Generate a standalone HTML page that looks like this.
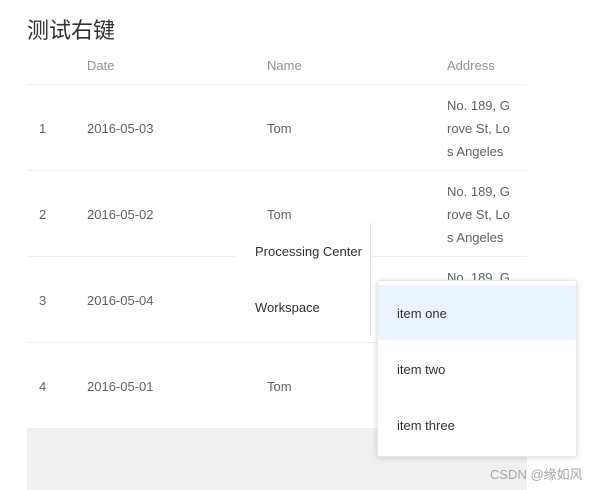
<!DOCTYPE html>
<html><head><meta charset="utf-8"><style>
body{margin:0;width:605px;height:490px;background:#fff;font-family:"Liberation Sans","Noto Sans CJK SC",sans-serif;font-size:13px;color:#606266;position:relative;overflow:hidden}
.a{position:absolute;white-space:nowrap}
.h{color:#909399}
.line{position:absolute;left:27px;width:500px;height:1px;background:#ebeef5}
.addr{position:absolute;left:447px;width:66px;line-height:23px;white-space:normal;word-break:break-all}
</style></head><body>
<div class="a" style="left:27px;top:13px;font-size:22px;color:#333">测试右键</div>
<div class="a h" style="left:87px;top:58px">Date</div>
<div class="a h" style="left:267px;top:58px">Name</div>
<div class="a h" style="left:447px;top:58px">Address</div>
<div class="line" style="top:84px"></div>
<div class="line" style="top:170px"></div>
<div class="line" style="top:256px"></div>
<div class="line" style="top:342px"></div>

<div class="a" style="left:39px;top:121px">1</div><div class="a" style="left:87px;top:121px">2016-05-03</div><div class="a" style="left:267px;top:121px">Tom</div>
<div class="addr" style="top:94px">No. 189, Grove St, Los Angeles</div>
<div class="a" style="left:39px;top:207px">2</div><div class="a" style="left:87px;top:207px">2016-05-02</div><div class="a" style="left:267px;top:207px">Tom</div>
<div class="addr" style="top:180px">No. 189, Grove St, Los Angeles</div>
<div class="a" style="left:39px;top:293px">3</div><div class="a" style="left:87px;top:293px">2016-05-04</div>
<div class="addr" style="top:266px">No. 189, Grove St, Los Angeles</div>
<div class="a" style="left:39px;top:379px">4</div><div class="a" style="left:87px;top:379px">2016-05-01</div><div class="a" style="left:267px;top:379px">Tom</div>
<div style="position:absolute;left:27px;top:428px;width:500px;height:62px;background:#f0f0f0"></div>

<div style="position:absolute;left:235px;top:223px;width:135px;height:112px;background:#fff;border-right:1px solid #dcdfe6"></div>
<div class="a" style="left:255px;top:244px;color:#303133">Processing Center</div>
<div class="a" style="left:255px;top:300px;color:#303133">Workspace</div>

<div style="position:absolute;left:377px;top:280px;width:200px;height:177px;background:#fff;border-radius:3px;box-shadow:0 1px 6px rgba(0,0,0,.15);border:1px solid #e4e7ed;box-sizing:border-box"></div>
<div style="position:absolute;left:378px;top:285px;width:198px;height:55px;background:#ecf5ff"></div>
<div class="a" style="left:397px;top:306px;color:#303133">item one</div>
<div class="a" style="left:397px;top:362px;color:#303133">item two</div>
<div class="a" style="left:397px;top:418px;color:#303133">item three</div>
<div class="a" style="left:490px;top:464px;color:#a8a8a8;font-size:13px">CSDN @缘如风</div>
</body></html>
